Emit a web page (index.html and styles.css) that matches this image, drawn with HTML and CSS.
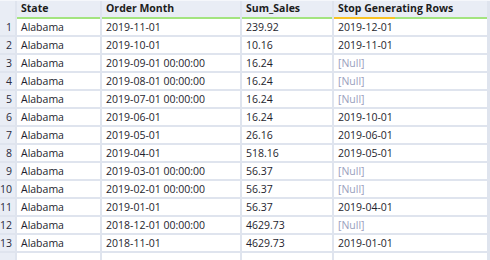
FILE: index.html
```html
<!DOCTYPE html>
<html lang="en">
<head>
  <meta charset="UTF-8">
  <title>Results</title>
  <link rel="stylesheet" href="styles.css">
</head>
<body>

<div id="grid">
  <div class="head num"></div>
  <div class="head">State</div>
  <div class="head">Order Month</div>
  <div class="head">Sum_Sales</div>
  <div class="head head-progress">Stop Generating Rows</div>

  <div class="num">1</div><div class="cell">Alabama</div><div class="cell">2019-11-01</div><div class="cell">239.92</div><div class="cell">2019-12-01</div>
  <div class="num">2</div><div class="cell">Alabama</div><div class="cell">2019-10-01</div><div class="cell">10.16</div><div class="cell">2019-11-01</div>
  <div class="num">3</div><div class="cell">Alabama</div><div class="cell">2019-09-01 00:00:00</div><div class="cell">16.24</div><div class="cell null">[Null]</div>
  <div class="num">4</div><div class="cell">Alabama</div><div class="cell">2019-08-01 00:00:00</div><div class="cell">16.24</div><div class="cell null">[Null]</div>
  <div class="num">5</div><div class="cell">Alabama</div><div class="cell">2019-07-01 00:00:00</div><div class="cell">16.24</div><div class="cell null">[Null]</div>
  <div class="num">6</div><div class="cell">Alabama</div><div class="cell">2019-06-01</div><div class="cell">16.24</div><div class="cell">2019-10-01</div>
  <div class="num">7</div><div class="cell">Alabama</div><div class="cell">2019-05-01</div><div class="cell">26.16</div><div class="cell">2019-06-01</div>
  <div class="num">8</div><div class="cell">Alabama</div><div class="cell">2019-04-01</div><div class="cell">518.16</div><div class="cell">2019-05-01</div>
  <div class="num">9</div><div class="cell">Alabama</div><div class="cell">2019-03-01 00:00:00</div><div class="cell">56.37</div><div class="cell null">[Null]</div>
  <div class="num">10</div><div class="cell">Alabama</div><div class="cell">2019-02-01 00:00:00</div><div class="cell">56.37</div><div class="cell null">[Null]</div>
  <div class="num">11</div><div class="cell">Alabama</div><div class="cell">2019-01-01</div><div class="cell">56.37</div><div class="cell">2019-04-01</div>
  <div class="num">12</div><div class="cell">Alabama</div><div class="cell">2018-12-01 00:00:00</div><div class="cell">4629.73</div><div class="cell null">[Null]</div>
  <div class="num">13</div><div class="cell">Alabama</div><div class="cell">2018-11-01</div><div class="cell">4629.73</div><div class="cell">2019-01-01</div>
  <div class="num"></div><div class="cell"></div><div class="cell"></div><div class="cell"></div><div class="cell"></div>
</div>

</body>
</html>
```

FILE: styles.css
```css
html, body {
    margin: 0;
    padding: 0;
    height: 100%;
    overflow: hidden;
    background: #dfe4ee;
}

#grid {
    display: grid;
    grid-template-columns: 15px 83px 138px 90px 153px;
    grid-auto-rows: 16px;
    gap: 2px;
    border-top: 1px solid #f5f7fb;
    font-family: 'Open Sans', sans-serif;
    font-size: 10.5px;
    color: #1e1e2e;
}

.head {
    height: 16px;
    line-height: 15px;
    padding-left: 4px;
    background: #e9edf5;
    border-bottom: 2px solid #a3e47f;
    font-weight: bold;
    color: #1c1c1c;
}

.head.num {
    border-bottom: none;
    height: 18px;
}

.head-progress {
    border-bottom: none;
    height: 18px;
    background:
        linear-gradient(#f7c325, #f7c325) left bottom / 61px 2px no-repeat,
        linear-gradient(#a3e47f, #a3e47f) left bottom / 100% 2px no-repeat,
        #e9edf5;
}

.num {
    background: #e9edf5;
    text-align: right;
    padding-right: 3px;
    line-height: 16px;
    color: #2a2a3a;
}

.cell {
    background: #fff;
    padding-left: 4px;
    line-height: 16px;
    white-space: nowrap;
    overflow: hidden;
}

.null {
    color: #9aa0bd;
}
```
